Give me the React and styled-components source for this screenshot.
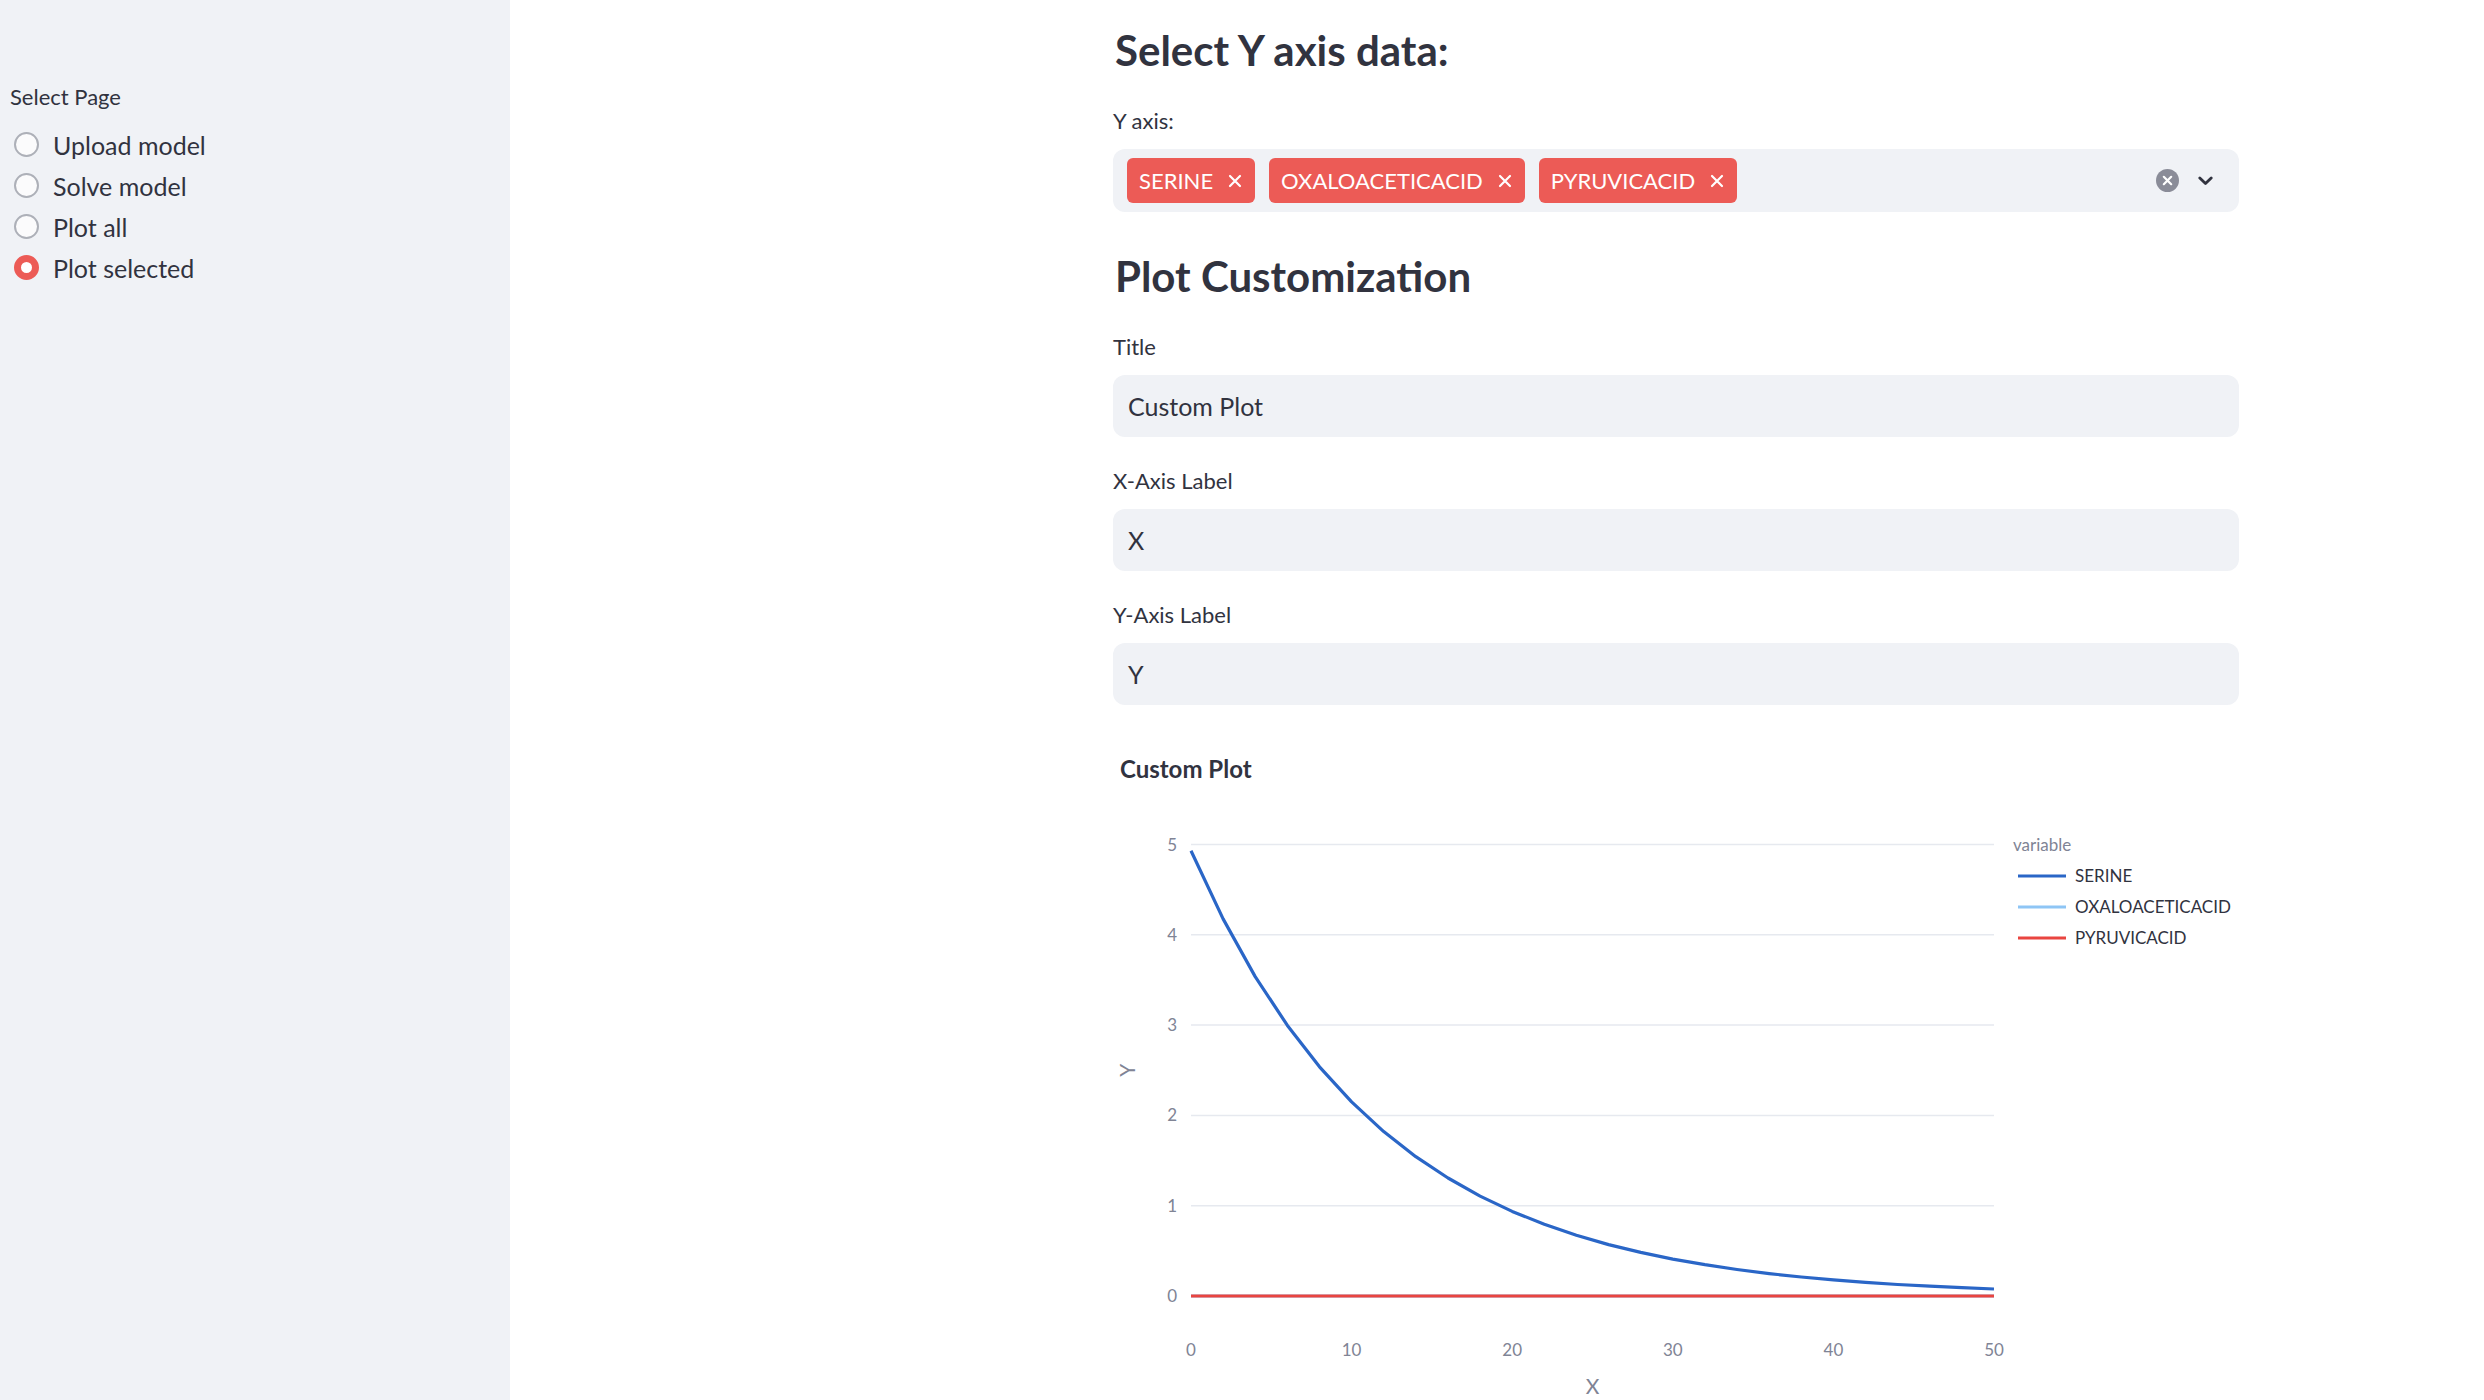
import React from "react";
import styled, { createGlobalStyle } from "styled-components";

const GlobalStyle = createGlobalStyle`
  html, body {
    margin: 0;
    padding: 0;
    background: #ffffff;
  }
  body {
    font-family: "Source Sans Pro", Lato, "Noto Sans", sans-serif;
    color: #31333f;
    overflow: hidden;
  }
  * {
    box-sizing: border-box;
  }
`;

const Page = styled.div`
  display: flex;
  width: 2484px;
  height: 1400px;
`;

const Sidebar = styled.aside`
  width: 510px;
  flex-shrink: 0;
  background: #f0f2f6;
  padding: 84px 10px 0;
`;

const SideLabel = styled.div`
  font-size: 22px;
  line-height: 26px;
  margin-bottom: 14px;
`;

const RadioRow = styled.label`
  display: flex;
  align-items: center;
  height: 41px;
  padding-left: 4px;
  gap: 14px;
  font-size: 25px;
  cursor: pointer;
`;

const RadioDot = styled.span`
  width: 25px;
  height: 25px;
  border-radius: 50%;
  flex-shrink: 0;
  border: ${(p) => (p.$checked ? "7px solid #ec5b56" : "2px solid #adb0b8")};
  background-color: ${(p) => (p.$checked ? "#ffffff" : "#fbfbfc")};
`;

const Main = styled.main`
  flex: 1;
  padding: 24px 0 0 603px;
`;

const Content = styled.div`
  width: 1126px;
  display: flex;
  flex-direction: column;
`;

const Heading = styled.h3`
  margin: ${(p) => p.$top || 0}px 0 31px;
  padding-left: 2px;
  font-size: 42px;
  line-height: 53px;
  font-weight: 700;
  color: #31333f;
`;

const FieldLabel = styled.div`
  font-size: 22px;
  line-height: 26px;
  margin-bottom: 15px;
`;

const Field = styled.div`
  display: flex;
  flex-direction: column;
  margin-bottom: ${(p) => p.$bottom ?? 31}px;
`;

const SelectBox = styled.div`
  display: flex;
  align-items: center;
  gap: 14px;
  height: 63px;
  background: #f0f2f6;
  border-radius: 12px;
  padding: 0 26px 0 14px;
`;

const Chip = styled.span`
  display: inline-flex;
  align-items: center;
  gap: 15px;
  height: 45px;
  padding: 0 13px 0 12px;
  border-radius: 6px;
  background: #ec5b56;
  color: #ffffff;
  font-size: 22px;
`;

const Controls = styled.div`
  margin-left: auto;
  display: flex;
  align-items: center;
  gap: 19px;
`;

const TextInput = styled.div`
  height: 62px;
  background: #f0f2f6;
  border-radius: 12px;
  padding: 0 15px;
  display: flex;
  align-items: center;
  font-size: 25px;
`;

const ChartWrap = styled.div`
  margin-top: 3px;
`;

const Cross = ({ size = 14, color = "#fff", width = 2.2 }) => (
  <svg width={size} height={size} viewBox="0 0 14 14">
    <path d="M2 2 L12 12 M12 2 L2 12" stroke={color} strokeWidth={width} strokeLinecap="round" />
  </svg>
);

const ClearIcon = () => (
  <svg width="23" height="23" viewBox="0 0 23 23">
    <circle cx="11.5" cy="11.5" r="11.5" fill="#8a8c98" />
    <path d="M7.8 7.8 L15.2 15.2 M15.2 7.8 L7.8 15.2" stroke="#fff" strokeWidth="2.2" strokeLinecap="round" />
  </svg>
);

const Chevron = () => (
  <svg width="15" height="10" viewBox="0 0 15 10">
    <path d="M1.8 2 L7.5 7.6 L13.2 2" fill="none" stroke="#31333f" strokeWidth="2.8" strokeLinecap="round" strokeLinejoin="round" />
  </svg>
);

const pages = ["Upload model", "Solve model", "Plot all", "Plot selected"];
const selected = ["SERINE", "OXALOACETICACID", "PYRUVICACID"];

const plotL = 78;
const plotR = 881;
const yOf = (v) => 557 - v * 90.3;
const xOf = (t) => plotL + (t / 50) * (plotR - plotL);

const serine = [];
for (let t = 0; t <= 50; t += 2) {
  serine.push(`${xOf(t).toFixed(1)},${yOf(4.93 * Math.exp(-0.083 * t)).toFixed(1)}`);
}

const tickStyle = { fontSize: 17, fill: "#808495" };

const legend = [
  ["SERINE", "#2a66c7"],
  ["OXALOACETICACID", "#8ec5f5"],
  ["PYRUVICACID", "#e94540"],
];

function Chart() {
  const midY = yOf(2.5);
  return (
    <svg width="1126" height="660" viewBox="0 0 1126 660" fontFamily="Lato, 'Noto Sans', sans-serif">
      <text x="7" y="39" fontSize="24" fontWeight="700" fill="#31333f">
        Custom Plot
      </text>
      {[0, 1, 2, 3, 4, 5].map((v) => (
        <g key={v}>
          <line x1={plotL} x2={plotR} y1={yOf(v)} y2={yOf(v)} stroke="#e6e9ef" strokeWidth="1.5" />
          <text x="64" y={yOf(v) + 6} textAnchor="end" style={tickStyle}>
            {v}
          </text>
        </g>
      ))}
      {[0, 10, 20, 30, 40, 50].map((t) => (
        <text key={t} x={xOf(t)} y="617" textAnchor="middle" style={tickStyle}>
          {t}
        </text>
      ))}
      <text x={(plotL + plotR) / 2} y="655" textAnchor="middle" fontSize="21" fill="#808495">
        X
      </text>
      <text x="22" y={midY} textAnchor="middle" fontSize="21" fill="#808495" transform={`rotate(-90 22 ${midY})`}>
        Y
      </text>
      <polyline points={serine.join(" ")} fill="none" stroke="#2a66c7" strokeWidth="3.2" strokeLinejoin="round" />
      <line x1={plotL} x2={plotR} y1={yOf(0)} y2={yOf(0)} stroke="#8ec5f5" strokeWidth="3.2" />
      <line x1={plotL} x2={plotR} y1={yOf(0)} y2={yOf(0)} stroke="#e94540" strokeWidth="3.2" />

      <text x="900" y="112" fontSize="17" fill="#808495">
        variable
      </text>
      {legend.map(([name, color], i) => {
        const y = 137 + i * 31;
        return (
          <g key={name}>
            <line x1="905" x2="953" y1={y} y2={y} stroke={color} strokeWidth="3" />
            <text x="962" y={y + 6} fontSize="17" fill="#31333f">
              {name}
            </text>
          </g>
        );
      })}
    </svg>
  );
}

export default function App() {
  return (
    <>
      <GlobalStyle />
      <Page>
        <Sidebar>
          <SideLabel>Select Page</SideLabel>
          {pages.map((p) => (
            <RadioRow key={p}>
              <RadioDot $checked={p === "Plot selected"} />
              {p}
            </RadioRow>
          ))}
        </Sidebar>
        <Main>
          <Content>
            <Heading>Select Y axis data:</Heading>
            <Field $bottom={0}>
              <FieldLabel>Y axis:</FieldLabel>
              <SelectBox>
                {selected.map((s) => (
                  <Chip key={s}>
                    {s}
                    <Cross />
                  </Chip>
                ))}
                <Controls>
                  <ClearIcon />
                  <Chevron />
                </Controls>
              </SelectBox>
            </Field>
            <Heading $top={38}>Plot Customization</Heading>
            <Field>
              <FieldLabel>Title</FieldLabel>
              <TextInput>Custom Plot</TextInput>
            </Field>
            <Field>
              <FieldLabel>X-Axis Label</FieldLabel>
              <TextInput>X</TextInput>
            </Field>
            <Field $bottom={31}>
              <FieldLabel>Y-Axis Label</FieldLabel>
              <TextInput>Y</TextInput>
            </Field>
            <ChartWrap>
              <Chart />
            </ChartWrap>
          </Content>
        </Main>
      </Page>
    </>
  );
}
